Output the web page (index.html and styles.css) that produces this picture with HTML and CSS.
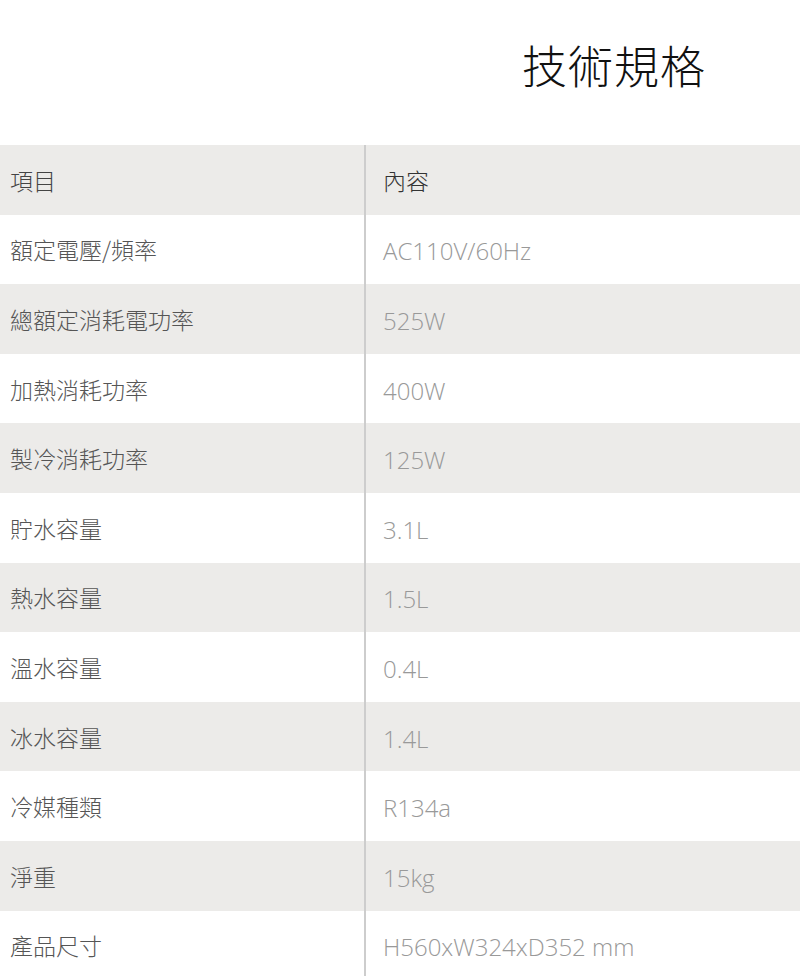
FILE: index.html
```html
<!DOCTYPE html>
<html lang="zh-Hant">
<head>
<meta charset="utf-8">
<title>技術規格</title>
<link rel="stylesheet" href="styles.css">
</head>
<body>
<div class="page">
  <h1 class="title">技術規格</h1>
  <div class="spec">
    <div class="row head"><div class="k">項目</div><div class="v">內容</div></div>
    <div class="row"><div class="k">額定電壓/頻率</div><div class="v">AC110V/60Hz</div></div>
    <div class="row alt"><div class="k">總額定消耗電功率</div><div class="v">525W</div></div>
    <div class="row"><div class="k">加熱消耗功率</div><div class="v">400W</div></div>
    <div class="row alt"><div class="k">製冷消耗功率</div><div class="v">125W</div></div>
    <div class="row"><div class="k">貯水容量</div><div class="v">3.1L</div></div>
    <div class="row alt"><div class="k">熱水容量</div><div class="v">1.5L</div></div>
    <div class="row"><div class="k">溫水容量</div><div class="v">0.4L</div></div>
    <div class="row alt"><div class="k">冰水容量</div><div class="v">1.4L</div></div>
    <div class="row"><div class="k">冷媒種類</div><div class="v">R134a</div></div>
    <div class="row alt"><div class="k">淨重</div><div class="v">15kg</div></div>
    <div class="row"><div class="k">產品尺寸</div><div class="v">H560xW324xD352 mm</div></div>
  </div>
</div>
</body>
</html>
```
FILE: styles.css
```css
html, body {
  margin: 0;
  padding: 0;
  background: #fff;
}
.page {
  width: 800px;
  font-family: "Noto Sans CJK TC", "Open Sans", sans-serif;
}
.title {
  margin: 0;
  height: 145px;
  box-sizing: border-box;
  padding: 33px 94px 0 0;
  text-align: right;
  font-size: 45px;
  font-weight: 300;
  line-height: 64px;
  color: #111;
  letter-spacing: 1px;
}
.spec {
  display: flex;
  flex-direction: column;
}
.row {
  display: grid;
  grid-template-columns: 364px 2px 1fr;
  height: 69.6px;
  align-items: center;
  background: #fff;
}
.row::before {
  content: "";
  grid-column: 2;
  grid-row: 1;
  align-self: stretch;
  background: #cdcdcd;
}
.row.head, .row.alt {
  background: #ecebe9;
}
.k {
  grid-column: 1;
  grid-row: 1;
  padding-left: 10px;
  font-size: 23px;
  color: #555;
  font-weight: 300;
}
.v {
  grid-column: 3;
  grid-row: 1;
  padding-left: 17px;
  padding-top: 3px;
  font-family: "Open Sans", "Noto Sans CJK TC", sans-serif;
  font-size: 24px;
  font-weight: 300;
  color: #999;
}
.head .v {
  font-family: "Noto Sans CJK TC", sans-serif;
  font-weight: 300;
  font-size: 23px;
  color: #333;
  padding-top: 0;
}
.head .k {
  color: #444;
}
```
